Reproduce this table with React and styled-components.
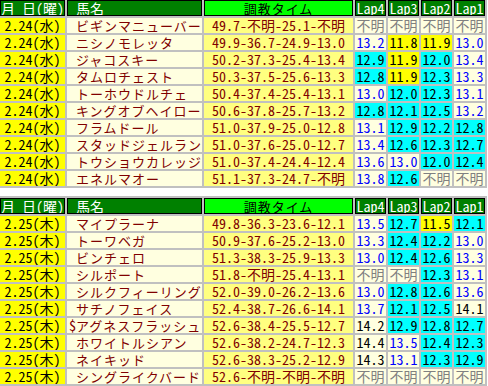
import React from "react";
import styled, { createGlobalStyle } from "styled-components";

const GlobalStyle = createGlobalStyle`
  html, body {
    margin: 0;
    padding: 0;
    background: #fff;
    overflow: hidden;
  }
`;

const Page = styled.div`
  display: flex;
  flex-direction: column;
  gap: 8px;
  margin: -2px 0 0 -2px;
`;

const Sheet = styled.div`
  display: grid;
  grid-template-columns: 65px 135px 149px repeat(4, 31px);
  grid-template-rows: 16px;
  grid-auto-rows: 15px;
  gap: 2px;
  padding: 2px;
  width: max-content;
  background: #c0c0c0;
  font-family: "Noto Sans CJK JP", sans-serif;
  font-size: 14px;
  font-feature-settings: "hwid" 1;
  line-height: 15px;
  white-space: nowrap;
`;

const HeadCell = styled.div`
  box-sizing: border-box;
  border: 1px solid #000;
  background: ${(p) => (p.$bright ? "#00ff00" : "#008000")};
  color: ${(p) => (p.$bright ? "#000" : "#fff")};
  text-align: ${(p) => p.$align || "center"};
  padding-left: ${(p) => (p.$align === "left" ? "8px" : "0")};
  line-height: 14px;
  overflow: hidden;
`;

const Kana = styled.span`
  font-size: 13px;
  letter-spacing: 1px;
`;

const DateCell = styled.div`
  background: #ffff00;
  color: #000;
  text-align: center;
  overflow: hidden;
`;

const NameCell = styled.div`
  background: #ffffe0;
  color: #800000;
  padding-left: 2px;
  overflow: hidden;
`;

const Marker = styled.span`
  display: inline-block;
  width: 7px;
`;

const TimeCell = styled.div`
  background: #ffff80;
  color: #800000;
  text-align: center;
  overflow: hidden;
`;

const tones = {
  none: { bg: "#ffffe0", fg: "#808080" },
  fast: { bg: "#ffff00", fg: "#000" },
  good: { bg: "#00ffff", fg: "#000" },
  slow: { bg: "#ffffe0", fg: "#0000ff" },
  plain: { bg: "#ffffe0", fg: "#000" },
};

const LapCell = styled.div`
  background: ${(p) => tones[p.$tone].bg};
  color: ${(p) => tones[p.$tone].fg};
  text-align: center;
  overflow: hidden;
`;

const toneOf = (v) => {
  if (v === "不明") return "none";
  const n = parseFloat(v);
  if (n < 12) return "fast";
  if (n < 13) return "good";
  if (n < 14) return "slow";
  return "plain";
};

const days = [
  {
    date: "2.24(水)",
    rows: [
      ["", "ビギンマニューバー", "49.7-不明-25.1-不明", "不明 不明 不明 不明"],
      ["", "ニシノモレッタ", "49.9-36.7-24.9-13.0", "13.2 11.8 11.9 13.0"],
      ["", "ジャコスキー", "50.2-37.3-25.4-13.4", "12.9 11.9 12.0 13.4"],
      ["", "タムロチェスト", "50.3-37.5-25.6-13.3", "12.8 11.9 12.3 13.3"],
      ["", "トーホウドルチェ", "50.4-37.4-25.4-13.1", "13.0 12.0 12.3 13.1"],
      ["", "キングオブヘイロー", "50.6-37.8-25.7-13.2", "12.8 12.1 12.5 13.2"],
      ["", "フラムドール", "51.0-37.9-25.0-12.8", "13.1 12.9 12.2 12.8"],
      ["", "スタッドジェルラン", "51.0-37.6-25.0-12.7", "13.4 12.6 12.3 12.7"],
      ["", "トウショウカレッジ", "51.0-37.4-24.4-12.4", "13.6 13.0 12.0 12.4"],
      ["", "エネルマオー", "51.1-37.3-24.7-不明", "13.8 12.6 不明 不明"],
    ],
  },
  {
    date: "2.25(木)",
    rows: [
      ["", "マイプラーナ", "49.8-36.3-23.6-12.1", "13.5 12.7 11.5 12.1"],
      ["", "トーワベガ", "50.9-37.6-25.2-13.0", "13.3 12.4 12.2 13.0"],
      ["", "ビンチェロ", "51.3-38.3-25.9-13.3", "13.0 12.4 12.6 13.3"],
      ["", "シルポート", "51.8-不明-25.4-13.1", "不明 不明 12.3 13.1"],
      ["", "シルクフィーリング", "52.0-39.0-26.2-13.6", "13.0 12.8 12.6 13.6"],
      ["", "サチノフェイス", "52.4-38.7-26.6-14.1", "13.7 12.1 12.5 14.1"],
      ["$", "アグネスフラッシュ", "52.6-38.4-25.5-12.7", "14.2 12.9 12.8 12.7"],
      ["", "ホワイトルシアン", "52.6-38.2-24.7-12.3", "14.4 13.5 12.4 12.3"],
      ["", "ネイキッド", "52.6-38.3-25.2-12.9", "14.3 13.1 12.3 12.9"],
      ["", "シングライクバード", "52.6-不明-不明-不明", "不明 不明 不明 不明"],
    ],
  },
];

const DayTable = ({ date, rows }) => (
  <Sheet>
    <HeadCell>月 日(曜)</HeadCell>
    <HeadCell $align="left">馬名</HeadCell>
    <HeadCell $bright>
      <Kana>調教タイム</Kana>
    </HeadCell>
    <HeadCell>Lap4</HeadCell>
    <HeadCell>Lap3</HeadCell>
    <HeadCell>Lap2</HeadCell>
    <HeadCell>Lap1</HeadCell>
    {rows.map(([mark, name, time, laps]) => (
      <React.Fragment key={name}>
        <DateCell>{date}</DateCell>
        <NameCell>
          <Marker>{mark}</Marker>
          <Kana>{name}</Kana>
        </NameCell>
        <TimeCell>{time}</TimeCell>
        {laps.split(" ").map((v, i) => (
          <LapCell key={i} $tone={toneOf(v)}>
            {v}
          </LapCell>
        ))}
      </React.Fragment>
    ))}
  </Sheet>
);

export default function App() {
  return (
    <>
      <GlobalStyle />
      <Page>
        {days.map((d) => (
          <DayTable key={d.date} {...d} />
        ))}
      </Page>
    </>
  );
}
